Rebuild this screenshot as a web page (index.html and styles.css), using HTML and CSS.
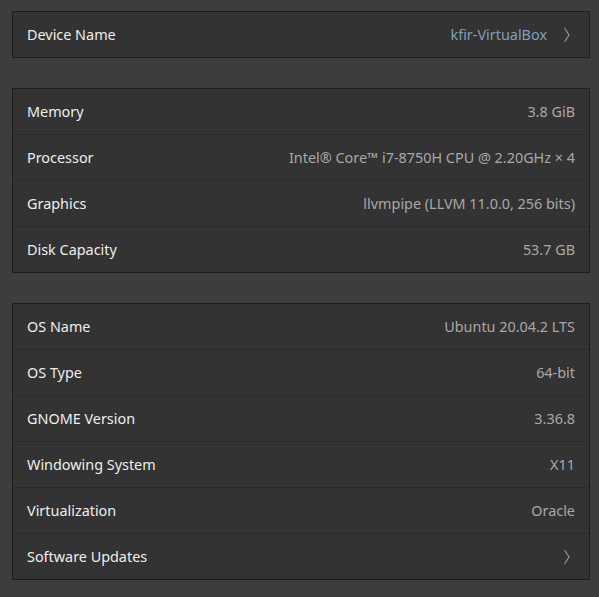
FILE: index.html
```html
<!DOCTYPE html>
<html>
<head>
<meta charset="utf-8">
<link rel="stylesheet" href="styles.css">
</head>
<body>
<div class="page">
  <div class="list">
    <div class="row">
      <span class="label">Device Name</span>
      <span class="value link">kfir-VirtualBox</span>
      <svg class="chev" width="8" height="16" viewBox="0 0 8 16"><path d="M1.5 1 L6 8 L1.5 15" fill="none" stroke="#9a9a9a" stroke-width="1.1"/></svg>
    </div>
  </div>
  <div class="list">
    <div class="row"><span class="label">Memory</span><span class="value">3.8 GiB</span></div>
    <div class="row"><span class="label">Processor</span><span class="value">Intel® Core™ i7-8750H CPU @ 2.20GHz × 4</span></div>
    <div class="row"><span class="label">Graphics</span><span class="value">llvmpipe (LLVM 11.0.0, 256 bits)</span></div>
    <div class="row"><span class="label">Disk Capacity</span><span class="value">53.7 GB</span></div>
  </div>
  <div class="list">
    <div class="row"><span class="label">OS Name</span><span class="value">Ubuntu 20.04.2 LTS</span></div>
    <div class="row"><span class="label">OS Type</span><span class="value">64-bit</span></div>
    <div class="row"><span class="label">GNOME Version</span><span class="value">3.36.8</span></div>
    <div class="row"><span class="label">Windowing System</span><span class="value">X11</span></div>
    <div class="row"><span class="label">Virtualization</span><span class="value">Oracle</span></div>
    <div class="row">
      <span class="label">Software Updates</span>
      <span class="value"></span>
      <svg class="chev" width="8" height="16" viewBox="0 0 8 16"><path d="M1.5 1 L6 8 L1.5 15" fill="none" stroke="#9a9a9a" stroke-width="1.1"/></svg>
    </div>
  </div>
</div>
</body>
</html>
```
FILE: styles.css
```css
html, body {
  margin: 0;
  padding: 0;
  background: #3d3d3d;
}
body {
  font-family: "Noto Sans", "Open Sans", sans-serif;
  font-size: 14.4px;
  color: #eeeeec;
}
.page {
  width: 578px;
  padding: 11px 0 0 12px;
  display: flex;
  flex-direction: column;
  gap: 30px;
}
.list {
  background: #333333;
  border: 1px solid #1e1e1e;
  display: flex;
  flex-direction: column;
}
.row {
  height: 45px;
  display: flex;
  align-items: center;
  padding: 0 14px;
  border-top: 1px solid #2a2a2a;
}
.row:first-child {
  border-top: none;
}
.label {
  flex: 1;
  white-space: nowrap;
}
.value {
  color: #a8a8a8;
  white-space: nowrap;
}
.value.link {
  color: #819ebd;
}
.chev {
  margin-left: 16px;
  margin-right: 4px;
  display: block;
}
```
